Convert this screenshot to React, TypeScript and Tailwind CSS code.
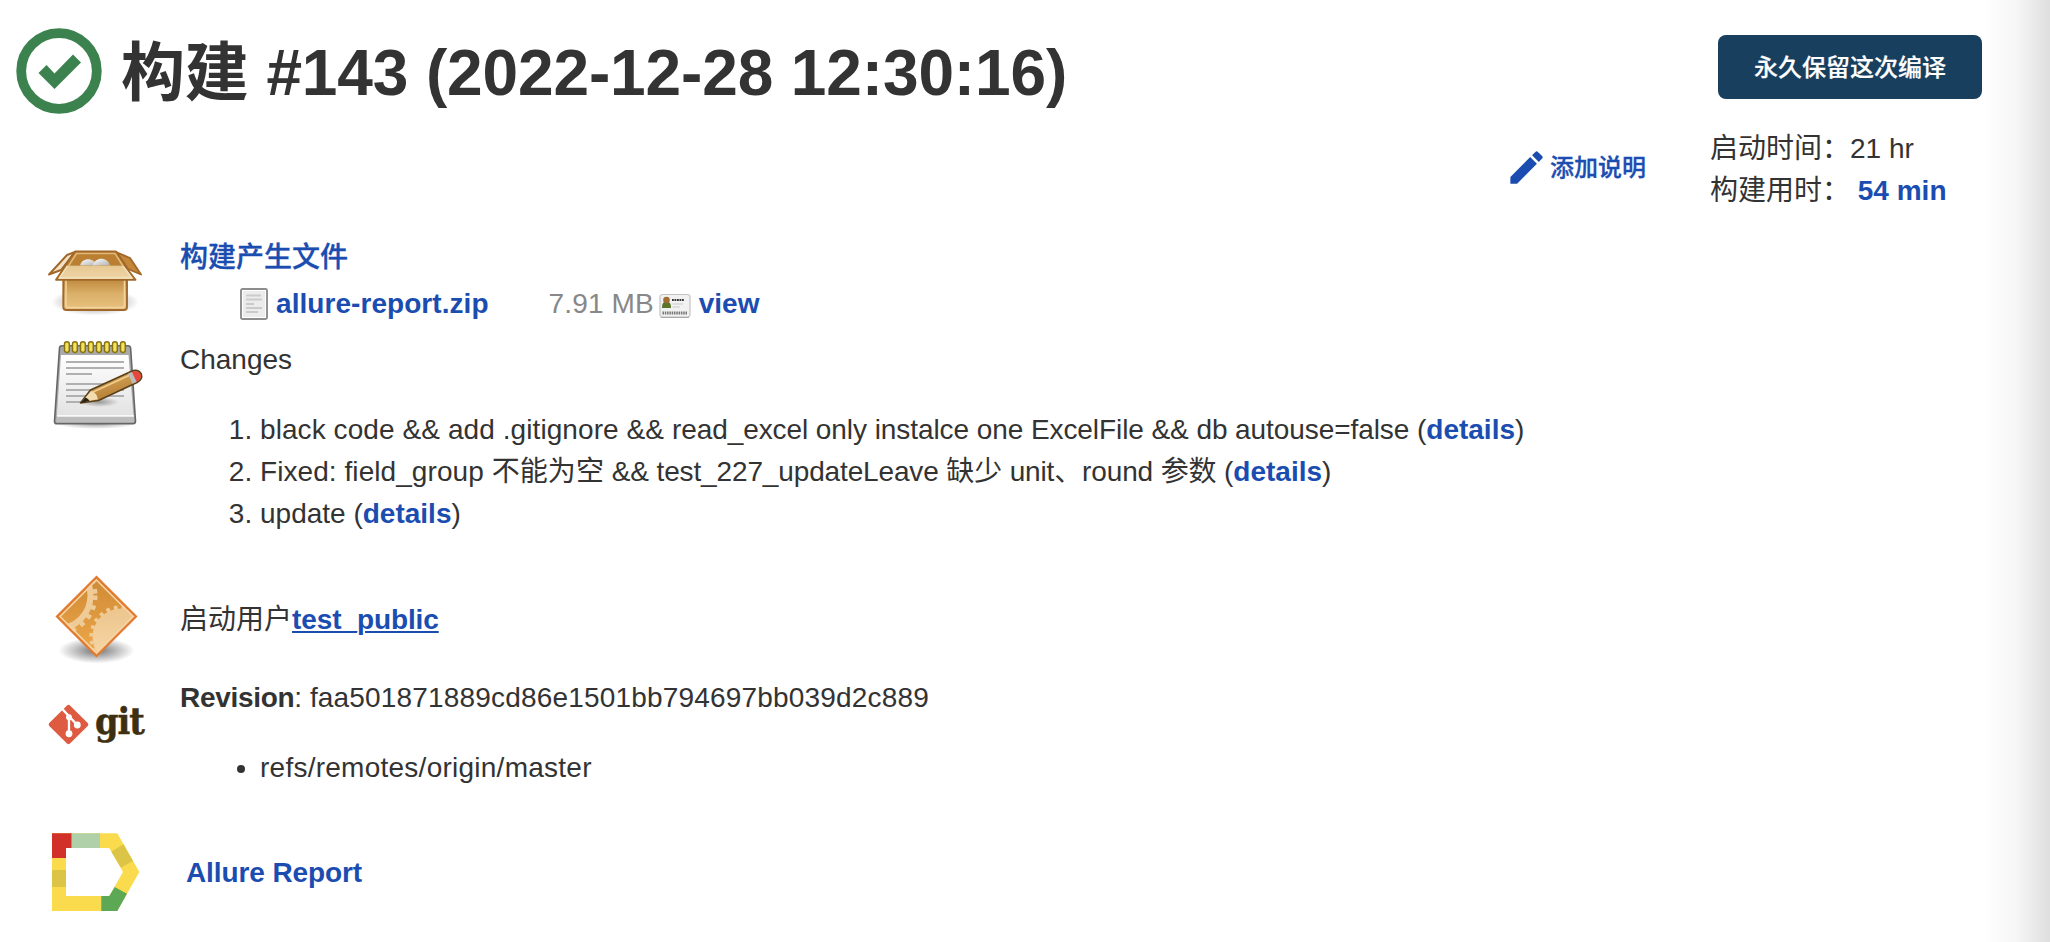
import React from "react";

const link = "font-bold text-[#1b4db1]";
const cjkLink = "font-medium text-[#1b4db1] [-webkit-text-stroke:0.3px_#1b4db1]";

function PackageIcon() {
  return (
    <svg width="96" height="96" viewBox="0 0 96 96" className="block">
      <defs>
        <linearGradient id="pk1" x1="0" y1="0" x2="0" y2="1">
          <stop offset="0" stopColor="#bd873a" />
          <stop offset=".5" stopColor="#dbb069" />
          <stop offset="1" stopColor="#e9c27f" />
        </linearGradient>
        <linearGradient id="pk2" x1="0" y1="0" x2="0" y2="1">
          <stop offset="0" stopColor="#e6c890" />
          <stop offset="1" stopColor="#efd6a9" />
        </linearGradient>
        <linearGradient id="pk3" x1="0" y1="0" x2="1" y2="1">
          <stop offset="0" stopColor="#fff" />
          <stop offset="1" stopColor="#b0b0b0" />
        </linearGradient>
        <radialGradient id="pk4">
          <stop offset="0" stopColor="#000" stopOpacity=".4" />
          <stop offset=".6" stopColor="#000" stopOpacity=".2" />
          <stop offset="1" stopColor="#000" stopOpacity="0" />
        </radialGradient>
      </defs>
      <ellipse cx="47" cy="67" rx="44" ry="13.500" fill="url(#pk4)" />
      <path d="M27 17 L19 20 L1 39.500 L13 35 Z" fill="#f3e3c4" stroke="#a1682a" strokeWidth="1.900" strokeLinejoin="round" />
      <path d="M68 17 L82 23 L93 39.500 L80 34 Z" fill="#c4873a" stroke="#a1682a" strokeWidth="1.900" strokeLinejoin="round" />
      <path d="M27 16.500 H68 L78 31 H17 Z" fill="#ba7f31" stroke="#a1682a" strokeWidth="1.900" strokeLinejoin="round" />
      <path d="M20.500 31 L28.500 18.500 H67 L75 31" fill="none" stroke="#e0b878" strokeWidth="1.600" />
      <path d="M32 30.500 C34 22 46 22 49 30.500 Z" fill="url(#pk3)" />
      <path d="M44.500 30.500 C47 21.500 60 21.500 62 30.500 Z" fill="url(#pk3)" />
      <path d="M15.300 43 V72 Q15.300 75 18.500 75 H76 Q79 75 79 72 V43 Z" fill="url(#pk1)" stroke="#a1682a" strokeWidth="1.900" />
      <path d="M18 45 V70 Q18 72.500 20.500 72.500 H74 Q76.500 72.500 76.500 70 V45" fill="none" stroke="#efd3a0" strokeWidth="1.600" />
      <path d="M17.500 30.500 H77 L87.500 44.800 H8 Z" fill="url(#pk2)" />
      <path d="M18 30 L8 44.800 H87.500 L76 30" fill="none" stroke="#a1682a" strokeWidth="1.900" strokeLinejoin="round" />
      <path d="M19.500 31 L11.500 43 H84 L75 31" fill="none" stroke="#f5e3c0" strokeWidth="1.300" />
    </svg>
  );
}

function NotepadIcon() {
  return (
    <svg width="96" height="96" viewBox="0 0 96 96" className="block">
      <defs>
        <linearGradient id="np1" x1="0" y1="0" x2="0" y2="1">
          <stop offset="0" stopColor="#fff" />
          <stop offset="1" stopColor="#e2e2e2" />
        </linearGradient>
        <radialGradient id="np2">
          <stop offset="0" stopColor="#000" stopOpacity=".35" />
          <stop offset="1" stopColor="#000" stopOpacity="0" />
        </radialGradient>
        <linearGradient id="np3" x1="0" y1="0" x2=".4" y2="1">
          <stop offset="0" stopColor="#e3b263" />
          <stop offset="1" stopColor="#b07a31" />
        </linearGradient>
      </defs>
      <ellipse cx="48" cy="87" rx="40" ry="5" fill="url(#np2)" />
      <path d="M14 8.700 H80 Q82.300 8.700 82.600 11 L87.500 84 Q87.500 86.800 85 86.800 H9 Q6.300 86.800 6.500 84 L11.500 11 Q11.700 8.700 14 8.700 Z" fill="#a9a9a9" stroke="#666" strokeWidth="1.600" />
      <path d="M13 18 H80.500 L85.500 79 H8.800 Z" fill="url(#np1)" />
      <path d="M8.700 80 H85.800 L86 85 H8.200 Z" fill="#bdbdbd" />
      <path d="M9 79 H86" stroke="#fff" strokeWidth="1.300" />
      <path d="M18 25 H76 M18 31 H76 M18 37 H44 M18 47 H76 M18 53 H76 M18 59 H76 M18 65 H35" stroke="#b0b0b0" strokeWidth="2" />
      <ellipse cx="51" cy="65" rx="20" ry="5" fill="url(#np2)" />
      {[16.500, 24.500, 32.500, 40.500, 48.500, 56.500, 64.500, 72.500].map((x) => (
        <rect key={x} x={x} y="4.800" width="4.800" height="10.700" rx="2.400" fill="#f7e25b" stroke="#8a7411" strokeWidth="1.500" />
      ))}
      <path d="M32.500 66 L42.500 53 L83 34.500 Q90 31.500 93.300 37 Q95 42.500 89 45.500 L50.500 63.500 Z" fill="url(#np3)" stroke="#59401a" strokeWidth="1.600" strokeLinejoin="round" />
      <path d="M44 55.500 L82 38" stroke="#f0cd90" strokeWidth="1.800" fill="none" />
      <path d="M33.500 65.300 L43 54 Q49 56 50 62.300 Z" fill="#f3dcae" />
      <path d="M32.500 66 L37.500 60.500 Q40.500 61.500 41.500 64 Z" fill="#2a2316" />
      <path d="M80 36.800 L84 35 L89 44.800 L84.500 46.800 Z" fill="#bdbdbd" />
      <path d="M84 35 Q90.500 32.800 92.600 37.500 Q94 42 88.500 44.800 Z" fill="#e8463f" />
    </svg>
  );
}

function PlanIcon() {
  return (
    <svg width="96" height="100" viewBox="0 0 96 100" className="block">
      <defs>
        <linearGradient id="pl1" x1="0" y1="0" x2="0" y2="1">
          <stop offset="0" stopColor="#cd8935" />
          <stop offset="1" stopColor="#f0a94a" />
        </linearGradient>
        <linearGradient id="pl2" x1="0" y1="0" x2="0" y2="1">
          <stop offset="0" stopColor="#ecc58e" />
          <stop offset="1" stopColor="#f8d9a9" />
        </linearGradient>
        <radialGradient id="pl3">
          <stop offset="0" stopColor="#000" stopOpacity=".55" />
          <stop offset="1" stopColor="#000" stopOpacity="0" />
        </radialGradient>
        <clipPath id="pl4"><path d="M48.500 9 L88 48.500 L48.500 88 L9 48.500 Z" /></clipPath>
      </defs>
      <ellipse cx="48.500" cy="82.500" rx="38" ry="13" fill="url(#pl3)" />
      <path d="M48.500 8.500 L88.500 48.500 L48.500 88.500 L8.500 48.500 Z" fill="url(#pl1)" />
      <g clipPath="url(#pl4)">
        <circle cx="9.500" cy="27.500" r="33" fill="none" stroke="#efcb98" strokeWidth="6" />
        <circle cx="9.500" cy="27.500" r="37.700" fill="none" stroke="#efcb98" strokeWidth="4.600" strokeDasharray="4.600 5.400" />
        <circle cx="73" cy="69" r="28.500" fill="url(#pl2)" />
        <circle cx="73" cy="69" r="29.700" fill="none" stroke="#efcb98" strokeWidth="4" strokeDasharray="3.600 4.200" />
      </g>
      <path d="M48.500 12 L85 48.500 L48.500 85 L12 48.500 Z" fill="none" stroke="#f6d4a4" strokeWidth="1.700" />
      <path d="M48.500 9 L88 48.500 L48.500 88 L9 48.500 Z" fill="none" stroke="#e27b31" strokeWidth="2.200" />
    </svg>
  );
}

function GitIcon() {
  return (
    <div className="flex h-[42px] w-[98px] items-center">
      <svg width="41" height="41" viewBox="0 0 42 42" className="block shrink-0">
        <path d="M19.500 1.500 Q21 .2 22.500 1.500 L40.700 19.500 Q42 21 40.700 22.500 L22.500 40.500 Q21 41.800 19.500 40.500 L1.300 22.500 Q0 21 1.300 19.500 Z" fill="#de5a40" />
        <path d="M14.500 5 L21.500 12.500 V31 M21.500 12.500 L29.500 21" stroke="#fff" strokeWidth="2.400" fill="none" />
        <circle cx="21.500" cy="13.500" r="3" fill="#fff" />
        <circle cx="21.500" cy="30.500" r="3.500" fill="#fff" />
        <circle cx="30" cy="21.500" r="3.500" fill="#fff" />
      </svg>
      <span className="-mt-[7px] ml-[6px] block origin-left scale-x-[.91] font-['DejaVu_Serif',serif] text-[37px] leading-[42px] font-bold tracking-[-1.2px] text-[#3e2f10] [-webkit-text-stroke:0.5px_#3e2f10]">git</span>
    </div>
  );
}

function AllureIcon() {
  return (
    <svg width="96" height="96" viewBox="0 0 96 96" className="block">
      <path d="M4 8.300 H69.300 L91.300 47 L69.300 86 H4 Z M18 23 V71 H61.300 L75 47 L61.300 23 Z" fill="#fbdb4e" fillRule="evenodd" />
      <path d="M4 8.300 H23.700 V23 H18 V33 H4 Z" fill="#d13129" />
      <path d="M23.700 8.300 H52 V23 H23.700 Z" fill="#afd0a9" />
      <path d="M4 45 H18 V62 H4 Z" fill="#dcc446" />
      <path d="M75.500 19.300 L85 36 L73 42.700 L63.300 26.700 Z" fill="#dcc446" />
      <path d="M66.700 62 L79 68.700 L69.300 86 H53.300 V71 H61.300 Z" fill="#5da854" />
    </svg>
  );
}

function Row({ icon, className, iconClass, children }: { icon: React.ReactNode; className: string; iconClass: string; children: React.ReactNode }) {
  return (
    <section className={"flex items-start " + className}>
      <div className={"w-[132px] shrink-0 " + iconClass}>{icon}</div>
      <div className="min-w-0">{children}</div>
    </section>
  );
}

function Details() {
  return <>(<a className={link}>details</a>)</>;
}

export default function App() {
  return (
    <div className="flex h-[942px] w-[2050px] overflow-hidden bg-white font-['Liberation_Sans','Noto_Sans_CJK_SC',sans-serif] text-[28px] leading-[42px] whitespace-nowrap text-[#333]">
      <main className="flex min-w-0 flex-1 flex-col">
        <header className="flex h-[237px] shrink-0 items-start justify-between">
          <h1 className="flex items-start pt-[28px] pl-4 text-[64px] leading-[86px] font-bold">
            <svg width="86" height="86" viewBox="0 0 86 86" className="mr-[19px] block">
              <circle cx="43" cy="43" r="37.800" fill="none" stroke="#3c824e" strokeWidth="9.800" />
              <path d="M22.500 45 L30.500 37 L38.500 45.500 L57 26.500 L65 34.500 L38.500 61 Z" fill="#3c824e" />
            </svg>
            <span className="pt-[2px] tracking-[-0.13px]">构建 #143 (2022-12-28 12:30:16)</span>
          </h1>
          <div className="flex items-start">
            <a className={"mt-[147px] mr-[64px] flex items-center text-[24px] " + cjkLink}>
              <svg width="43" height="43" viewBox="0 0 24 24" fill="currentColor" stroke="none" className="mr-[2px] -mt-[2px] block">
                <path d="M3 17.250V21h3.750L17.810 9.940l-3.750-3.750L3 17.250zM20.710 7.040a.996.996 0 0 0 0-1.410l-2.340-2.340a.996.996 0 0 0-1.410 0l-1.830 1.830 3.750 3.750 1.830-1.830z" />
              </svg>
              添加说明
            </a>
            <div className="w-[274px]">
              <button className="mt-[35px] ml-[8px] block h-16 w-[264px] rounded-lg bg-[#193f5f] pt-[2px] text-center text-[24px] font-medium text-white [-webkit-text-stroke:0.2px_white]">永久保留这次编译</button>
              <div className="mt-[29px]">启动时间：21 hr</div>
              <div>构建用时： <a className={link}>54 min</a></div>
            </div>
          </div>
        </header>

        <Row className="h-[102px] pl-12" iconClass="-mt-[2px]" icon={<PackageIcon />}>
          <a className={"block " + cjkLink}>构建产生文件</a>
          <div className="mt-1 flex items-center pl-[60px]">
            <svg width="28" height="32" viewBox="0 0 28 32" className="mr-2 block">
              <rect x="1" y="1" width="26" height="30" rx="1.500" fill="#ececec" stroke="#8d8d8d" strokeWidth="1.900" />
              <rect x="2.500" y="2.500" width="23" height="27" fill="none" stroke="#fff" />
              <path d="M6 7.500 H21 M6 11.500 H22 M6 16 H14 M6 20 H22 M6 24 H18" stroke="#cbcbcb" strokeWidth="1.900" />
            </svg>
            <a className={link + " tracking-[0.06px]"}>allure-report.zip</a>
            <span className="ml-[60px] tracking-[0.12px] text-[#888]">7.91 MB</span>
            <svg width="32" height="26" viewBox="0 0 32 26" className="mt-[3px] mr-2 ml-[5px] block">
              <rect x="1" y="1.500" width="30" height="22.500" rx="2.500" fill="#f1f1f1" stroke="#c4c4c4" strokeWidth="1.200" />
              <path d="M1.800 24.500 H30" stroke="#aaa" strokeWidth="1" />
              <path d="M3 14 Q3 8.500 7.500 8.500 Q12 8.500 12 14 V15 H3 Z" fill="#5c752d" />
              <circle cx="7.500" cy="7" r="3.300" fill="#a06d32" />
              <path d="M13 7 H25" stroke="#333" strokeWidth="2" strokeDasharray="1.800 .7" />
              <path d="M13.500 11 H24 M13.500 14 H21" stroke="#ccc" strokeWidth="1.200" />
              <path d="M3.500 20 H28" stroke="#777" strokeWidth="3.200" strokeDasharray="1.500 .8" />
            </svg>
            <a className={link}>view</a>
          </div>
        </Row>

        <Row className="h-[233px] pl-12" iconClass="-mt-[2px]" icon={<NotepadIcon />}>
          <div>Changes</div>
          <ol className="mt-7 list-decimal pl-20">
            <li>
              <span className="tracking-[0.08px]">black code &amp;&amp; add .gitignore &amp;&amp; </span>
              <span className="tracking-[-0.075px]">read_excel only instalce one ExcelFile &amp;&amp; db autouse=false </span>
              <Details />
            </li>
            <li>
              <span className="tracking-[0.07px]">Fixed: field_group 不能为空 </span>
              <span className="tracking-[-0.14px]">&amp;&amp; test_227_updateLeave 缺少 unit、round 参数 </span>
              <Details />
            </li>
            <li>update <Details /></li>
          </ol>
        </Row>

        <Row className="h-[105px] pl-12" iconClass="-mt-[4px]" icon={<PlanIcon />}>
          <div className="mt-[27px]">启动用户<a className={link + " tracking-[-0.1px] underline decoration-2 underline-offset-2"}>test_public</a></div>
        </Row>

        <Row className="h-[142px] pl-12" iconClass="pt-[26px]" icon={<GitIcon />}>
          <div><b className="tracking-[-0.3px]">Revision</b>: <span className="tracking-[0.18px]">faa501871889cd86e1501bb794697bb039d2c889</span></div>
          <ul className="mt-7 list-disc pl-20"><li className="tracking-[0.25px]">refs/remotes/origin/master</li></ul>
        </Row>

        <Row className="h-[123px] pl-12" iconClass="pt-[6px]" icon={<AllureIcon />}>
          <a className={"mt-[33px] ml-1.5 block tracking-[-0.1px] " + link}>Allure Report</a>
        </Row>
      </main>
      <aside className="h-full w-[66px] shrink-0 bg-gradient-to-r from-white via-[#f6f6f6] to-[#dedede]" />
    </div>
  );
}
